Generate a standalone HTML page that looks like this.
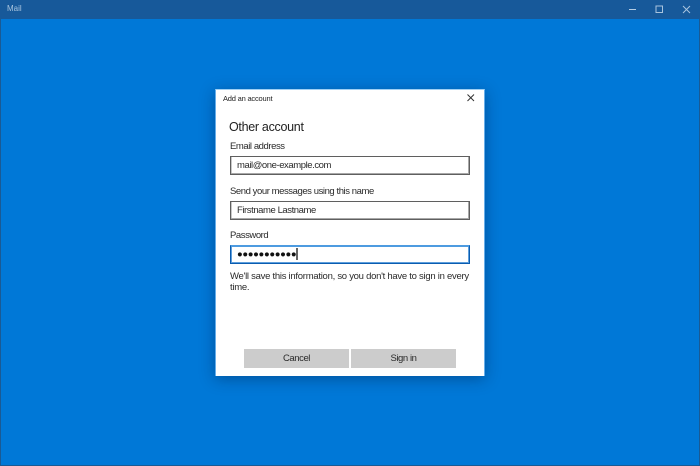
<!DOCTYPE html>
<html>
<head>
<meta charset="utf-8">
<style>
html,body{margin:0;padding:0;width:700px;height:466px;overflow:hidden;background:#0078d7;font-family:"Liberation Sans",sans-serif;color:#1a1a1a}
div{position:absolute;box-sizing:border-box;white-space:nowrap}
.t{font-size:9.5px;line-height:12px;color:#2a2a2a;letter-spacing:-.43px}
.in{left:230px;width:240px;height:19px;background:#fff;border:1px solid #5f5f5f;box-shadow:inset -1px -1px 0 #a8a8a8,inset 1px 0 0 #c8c8c8}
</style>
</head>
<body>
<div style="left:0;top:0;width:700px;height:466px;border:1px solid #1a5a94;border-top:0"></div>
<div style="left:0;top:0;width:700px;height:19px;background:#17599a"></div>
<div style="left:7px;top:3px;font-size:8px;line-height:12px;color:#a9c4de">Mail</div>
<svg style="position:absolute;left:620px;top:0" width="80" height="19" viewBox="0 0 80 19">
<path d="M9 9.5H16" stroke="#b5cde4" stroke-width="1" fill="none"/>
<rect x="36" y="6" width="6.5" height="6.5" stroke="#a9c4de" stroke-width="1" fill="none"/>
<path d="M63 6L70 13M70 6L63 13" stroke="#a9c4de" stroke-width="1" fill="none"/>
</svg>
<div style="left:215px;top:89px;width:270px;height:287px;background:#fff;border:1px solid #66aeea;border-top-color:#9fd0f5;border-bottom:0;box-shadow:0 3px 14px rgba(0,30,70,.4)"></div>
<div style="left:223px;top:93px;font-size:7.5px;line-height:12px;color:#222;letter-spacing:-.2px">Add an account</div>
<svg style="position:absolute;left:465px;top:92px" width="12" height="12" viewBox="0 0 12 12">
<path d="M2.5 2.5L9 9M9 2.5L2.5 9" stroke="#333" stroke-width="1" fill="none"/>
</svg>
<div style="left:229px;top:120px;font-size:12.5px;line-height:14px;color:#222;letter-spacing:-.3px">Other account</div>
<div class="t" style="left:230px;top:141px">Email address</div>
<div class="in" style="top:156px"></div>
<div class="t" style="left:237px;top:160px">mail@one-example.com</div>
<div class="t" style="left:230px;top:186px">Send your messages using this name</div>
<div class="in" style="top:201px"></div>
<div class="t" style="left:237px;top:205px">Firstname Lastname</div>
<div class="t" style="left:230px;top:230px">Password</div>
<div class="in" style="top:245px;height:19px;border:1px solid #0a5cb0;border-top-color:#4d9be0;box-shadow:inset 0 1px 0 #4d9be0,inset 1px 0 0 #5f9fdc,inset -1px -1px 0 #5f9fdc"></div>
<div style="left:237px;top:248px;font-size:9.5px;line-height:13px;letter-spacing:-.35px;color:#111">●●●●●●●●●●●</div>
<div style="left:296px;top:248px;width:1.5px;height:12px;background:#666"></div>
<div class="t" style="left:230px;top:271px;letter-spacing:-.27px">We'll save this information, so you don't have to sign in every</div>
<div class="t" style="left:230px;top:282px;letter-spacing:-.27px">time.</div>
<div style="left:244px;top:349px;width:105px;height:19px;background:#ccc"></div>
<div style="left:351px;top:349px;width:105px;height:19px;background:#ccc"></div>
<div class="t" style="left:244px;top:353px;width:105px;text-align:center">Cancel</div>
<div class="t" style="left:351px;top:353px;width:105px;text-align:center">Sign in</div>
</body>
</html>
